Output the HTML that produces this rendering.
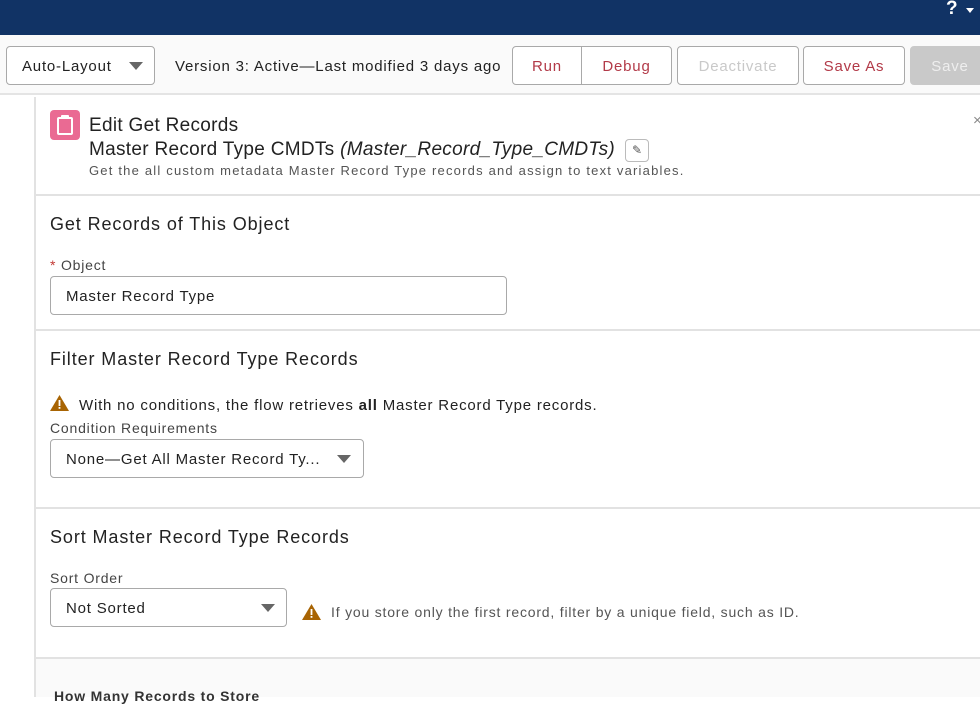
<!DOCTYPE html>
<html><head><meta charset="utf-8"><style>
*{box-sizing:border-box;margin:0;padding:0}
body{width:980px;height:697px;overflow:hidden;background:#fff;font-family:"Liberation Sans",Arial,sans-serif;color:#222;position:relative;letter-spacing:0.8px}
.a{position:absolute}
.btn{position:absolute;top:46px;height:39px;border:1px solid #a9a9a9;border-radius:4px;background:#fff;color:#b23a48;font-size:15px;display:flex;align-items:center;justify-content:center;padding-top:2px}
.sel{position:absolute;border:1px solid #a9a9a9;border-radius:4px;background:#fff;font-size:15px;padding-left:15px;padding-top:2px;display:flex;align-items:center}
.tri{position:absolute;width:0;height:0;border-left:7px solid transparent;border-right:7px solid transparent;border-top:8px solid #666}
.h{position:absolute;left:50px;font-size:18px;color:#222;letter-spacing:0.9px}
.lbl{position:absolute;left:50px;font-size:14px;color:#444}
.line{position:absolute;left:34px;right:0;height:2px;background:#e2e2e2}
</style></head><body>
<div class="a" style="left:0;top:0;width:980px;height:35px;background:#113365"></div>
<div class="a" style="left:946px;top:-2px;color:#fff;font-size:19px;font-weight:bold">?</div>
<div class="a" style="left:966px;top:8px;width:0;height:0;border-left:4px solid transparent;border-right:4px solid transparent;border-top:5px solid #fff"></div>
<div class="a" style="left:0;top:35px;width:980px;height:60px;background:#fafafa;border-bottom:2px solid #e4e4e4"></div>
<div class="sel" style="left:6px;top:46px;width:149px;height:39px">Auto-Layout</div>
<div class="tri" style="left:129px;top:62px"></div>
<div class="a" style="left:175px;top:58px;font-size:15px">Version 3: Active—Last modified 3 days ago</div>
<div class="btn" style="left:512px;width:70px;border-radius:4px 0 0 4px">Run</div>
<div class="btn" style="left:581px;width:91px;border-radius:0 4px 4px 0">Debug</div>
<div class="btn" style="left:677px;width:122px;color:#c9c9c9">Deactivate</div>
<div class="btn" style="left:803px;width:102px">Save As</div>
<div class="btn" style="left:910px;width:80px;background:#c9c9c9;border-color:#c9c9c9;color:#eee">Save</div>
<div class="a" style="left:34px;top:97px;width:2px;height:600px;background:#e2e2e2"></div>
<div class="a" style="left:50px;top:110px;width:30px;height:30px;background:#ea6a93;border-radius:4px"></div>
<div class="a" style="left:57px;top:117px;width:16px;height:18px;border:2px solid #fff;border-radius:2px"></div>
<div class="a" style="left:61px;top:115px;width:8px;height:4px;background:#fff;border-radius:1px"></div>
<div class="a" style="left:89px;top:115px;font-size:19px;letter-spacing:0.3px">Edit Get Records</div>
<div class="a" style="left:89px;top:139px;font-size:19px;letter-spacing:0.3px">Master Record Type CMDTs <i>(Master_Record_Type_CMDTs)</i></div>
<div class="a" style="left:625px;top:139px;width:24px;height:23px;border:1px solid #bbb;border-radius:4px;font-size:12px;text-align:center;line-height:21px;color:#555;letter-spacing:0">✎</div>
<div class="a" style="left:89px;top:163px;font-size:13px;color:#555;letter-spacing:1.2px">Get the all custom metadata Master Record Type records and assign to text variables.</div>
<div class="a" style="left:973px;top:112px;font-size:15px;color:#888">×</div>
<div class="line" style="top:194px"></div>
<div class="h" style="top:214px">Get Records of This Object</div>
<div class="lbl" style="top:257px"><span style="color:#c23934">*</span> Object</div>
<div class="sel" style="left:50px;top:276px;width:457px;height:39px">Master Record Type</div>
<div class="line" style="top:329px"></div>
<div class="h" style="top:349px">Filter Master Record Type Records</div>
<svg class="a" style="left:49px;top:394px" width="21" height="18" viewBox="0 0 21 18"><path d="M10.5 1L20 17H1z" fill="#a86403"/><rect x="9.6" y="6" width="1.8" height="6" fill="#fff"/><rect x="9.6" y="13" width="1.8" height="1.8" fill="#fff"/></svg>
<div class="a" style="left:79px;top:397px;font-size:15px">With no conditions, the flow retrieves <b>all</b> Master Record Type records.</div>
<div class="lbl" style="top:420px">Condition Requirements</div>
<div class="sel" style="left:50px;top:439px;width:314px;height:39px">None—Get All Master Record Ty...</div>
<div class="tri" style="left:337px;top:455px"></div>
<div class="line" style="top:507px"></div>
<div class="h" style="top:527px">Sort Master Record Type Records</div>
<div class="lbl" style="top:570px">Sort Order</div>
<div class="sel" style="left:50px;top:588px;width:237px;height:39px">Not Sorted</div>
<div class="tri" style="left:261px;top:604px"></div>
<svg class="a" style="left:301px;top:603px" width="21" height="18" viewBox="0 0 21 18"><path d="M10.5 1L20 17H1z" fill="#a86403"/><rect x="9.6" y="6" width="1.8" height="6" fill="#fff"/><rect x="9.6" y="13" width="1.8" height="1.8" fill="#fff"/></svg>
<div class="a" style="left:331px;top:604px;font-size:14px;color:#555">If you store only the first record, filter by a unique field, such as ID.</div>
<div class="line" style="top:657px"></div>
<div class="a" style="left:36px;top:659px;width:944px;height:38px;background:#fafafa"></div>
<div class="a" style="left:54px;top:688px;font-size:14px;font-weight:bold;color:#333">How Many Records to Store</div>
</body></html>
